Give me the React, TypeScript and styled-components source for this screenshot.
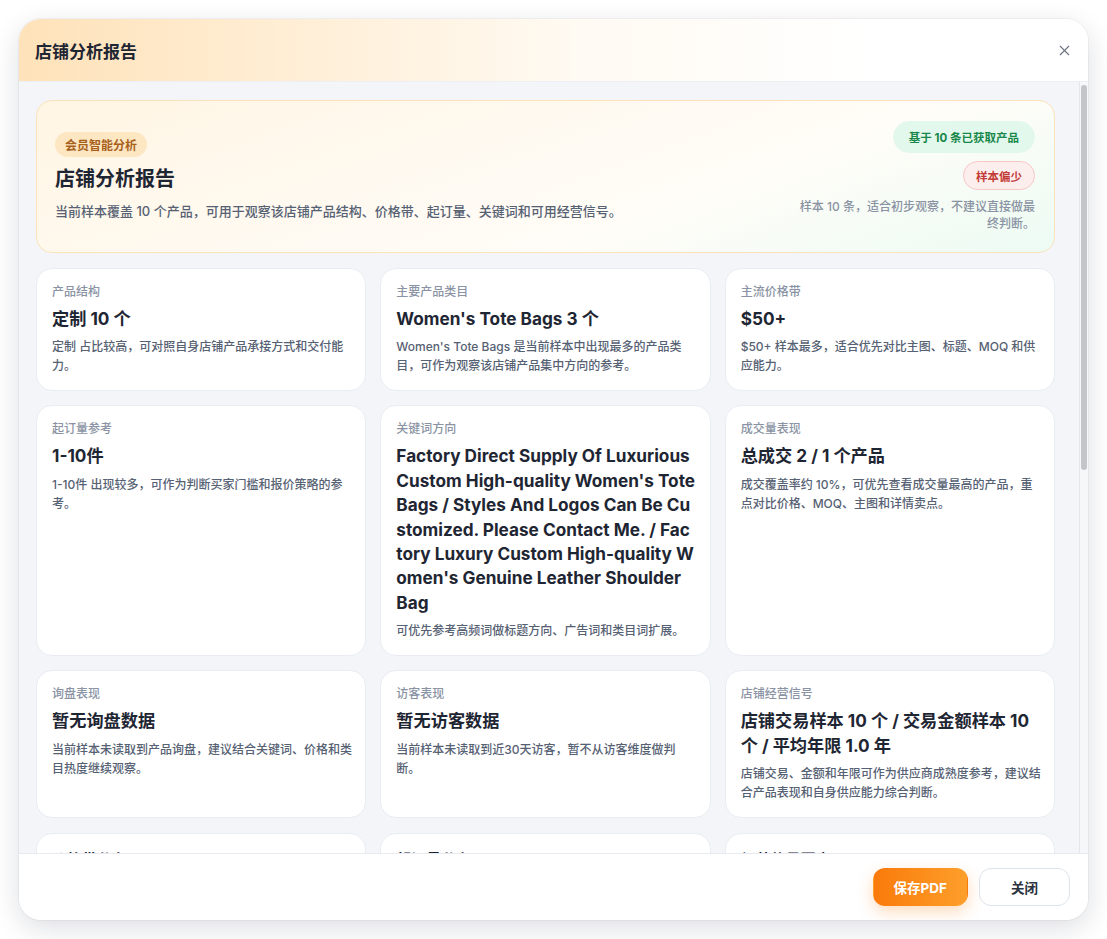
import React from 'react';
import styled, { createGlobalStyle } from 'styled-components';
import { X } from 'lucide-react';

const GlobalStyle = createGlobalStyle`
  * { box-sizing: border-box; }
  html, body { margin: 0; padding: 0; background: #ffffff; }
  body {
    font-family: Inter, "Noto Sans CJK SC", "Noto Sans", sans-serif;
    color: #1f2633;
    -webkit-font-smoothing: antialiased;
  }
`;

const Page = styled.div`
  width: 1107px;
  height: 939px;
  padding: 19px;
`;

const Modal = styled.div`
  height: 901px;
  display: flex;
  flex-direction: column;
  background: #fff;
  border-radius: 22px;
  overflow: hidden;
  box-shadow: 0 8px 28px rgba(15, 23, 42, 0.14), 0 0 0 1px rgba(15, 23, 42, 0.04);
`;

const Header = styled.div`
  height: 63px;
  flex: none;
  display: flex;
  align-items: center;
  justify-content: space-between;
  padding: 0 15px 0 16px;
  background: linear-gradient(90deg, #fee2b9 0%, #ffefd8 28%, #fffaf2 52%, #ffffff 80%);
  border-bottom: 1px solid #eceff4;
`;

const HeaderTitle = styled.h1`
  margin: 0;
  font-size: 17px;
  font-weight: 700;
  color: #1f2633;
`;

const CloseIcon = styled.button`
  border: none;
  background: none;
  padding: 0;
  display: flex;
  color: #6b7280;
  cursor: pointer;
`;

const BodyRow = styled.div`
  flex: 1;
  min-height: 0;
  display: flex;
  background: #f3f5f9;
`;

const Body = styled.div`
  flex: 1;
  min-width: 0;
  overflow-y: auto;
  scrollbar-width: none;
  padding: 18px 24px 24px 17px;
  display: flex;
  flex-direction: column;
  gap: 15px;

  &::-webkit-scrollbar {
    display: none;
  }
`;

// static rail, the headless browser hides real scrollbars
const ScrollRail = styled.div`
  width: 9px;
  flex: none;
  background: #f6f7f9;
  border-left: 1px solid #e3e6eb;
  padding: 3px 1px 0 1px;
`;

const ScrollThumb = styled.div`
  height: 385px;
  width: 6px;
  border-radius: 3px;
  background: #c3c5c9;
`;

const Hero = styled.div`
  flex: none;
  display: flex;
  align-items: center;
  justify-content: space-between;
  gap: 24px;
  padding: 20px 19px 20px 18px;
  border: 1px solid #fbe2bb;
  border-radius: 16px;
  background: linear-gradient(160deg, #fff5e3 0%, #fffaf2 45%, #fffdf8 65%, #ecfbf3 100%);
`;

const HeroMain = styled.div`
  display: flex;
  flex-direction: column;
  align-items: flex-start;
  gap: 8px;
`;

const MemberBadge = styled.span`
  height: 25px;
  display: inline-flex;
  align-items: center;
  padding: 0 10px;
  border-radius: 13px;
  background: #fde7c2;
  color: #a8611b;
  font-size: 12px;
  font-weight: 700;
`;

const HeroTitle = styled.h2`
  margin: 0;
  font-size: 20px;
  line-height: 28px;
  font-weight: 700;
  color: #1f2633;
`;

const HeroText = styled.p`
  margin: 0;
  font-size: 13px;
  line-height: 20px;
  font-weight: 500;
  color: #566173;
`;

const HeroSide = styled.div`
  display: flex;
  flex-direction: column;
  align-items: flex-end;
  gap: 8px;
`;

const Pill = styled.span<{ $tone: 'green' | 'red' }>`
  display: inline-flex;
  align-items: center;
  border-radius: 16px;
  font-size: 11.5px;
  font-weight: 700;
  height: ${(p) => (p.$tone === 'green' ? '32px' : '29px')};
  padding: ${(p) => (p.$tone === 'green' ? '0 15px' : '0 12px')};
  background: ${(p) => (p.$tone === 'green' ? '#e3f8ec' : '#fdeeee')};
  color: ${(p) => (p.$tone === 'green' ? '#17874a' : '#c23a36')};
  border: 1px solid ${(p) => (p.$tone === 'green' ? '#e3f8ec' : '#f6c6c4')};
`;

const SideNote = styled.p`
  margin: 0;
  max-width: 236px;
  text-align: right;
  font-size: 12px;
  line-height: 17px;
  font-weight: 500;
  color: #8a93a3;
`;

const Grid = styled.div`
  flex: none;
  display: grid;
  grid-template-columns: repeat(3, 1fr);
  gap: 14px;
`;

const Card = styled.div`
  background: #fff;
  border: 1px solid #e9edf3;
  border-radius: 16px;
  padding: 15px 12px 15px 15px;
  display: flex;
  flex-direction: column;
`;

const Label = styled.div`
  font-size: 12px;
  line-height: 16px;
  font-weight: 500;
  color: #8a93a3;
`;

const Value = styled.div`
  margin-top: 7px;
  margin-right: 2px;
  font-size: 17.2px;
  line-height: 24.4px;
  font-weight: 700;
  color: #1f2633;
  word-break: break-all;
`;

const Note = styled.p`
  margin: 6px 0 0;
  font-size: 12px;
  line-height: 19px;
  font-weight: 500;
  color: #566173;
`;

const SectionTitle = styled.div`
  font-size: 15px;
  line-height: 22px;
  font-weight: 700;
  color: #1f2633;
  margin-bottom: 12px;
`;

const BarRow = styled.div`
  display: grid;
  grid-template-columns: 70px 1fr 30px;
  align-items: center;
  gap: 10px;
  font-size: 12px;
  color: #566173;
  font-weight: 500;
  height: 30px;
`;

const BarTrack = styled.div`
  height: 8px;
  border-radius: 4px;
  background: #eef1f5;
  overflow: hidden;
`;

const BarFill = styled.div`
  height: 100%;
  border-radius: 4px;
  background: linear-gradient(90deg, #fb8a1c, #fdb14a);
`;

const Count = styled.span`
  text-align: right;
  color: #1f2633;
  font-weight: 600;
`;

const SignalList = styled.ul`
  margin: 0;
  padding-left: 18px;
  font-size: 12px;
  line-height: 22px;
  color: #566173;
  font-weight: 500;
`;

const Footer = styled.div`
  height: 67px;
  flex: none;
  display: flex;
  align-items: center;
  justify-content: flex-end;
  gap: 11px;
  padding: 0 18px;
  border-top: 1px solid #e7ebf1;
  background: #fff;
`;

const Button = styled.button<{ $primary?: boolean }>`
  height: 38px;
  border-radius: 12px;
  font-family: inherit;
  font-size: 13.5px;
  font-weight: 700;
  cursor: pointer;
  padding: 0 20px;
  min-width: ${(p) => (p.$primary ? '95px' : '91px')};
  color: ${(p) => (p.$primary ? '#fff' : '#2b3340')};
  border: 1px solid ${(p) => (p.$primary ? 'transparent' : '#dde3eb')};
  background: ${(p) => (p.$primary ? 'linear-gradient(90deg, #fa7a0a, #fd9f2b)' : '#fff')};
  box-shadow: ${(p) => (p.$primary ? '0 6px 16px rgba(250, 130, 20, 0.28)' : 'none')};
`;

const metrics = [
  { label: '产品结构', value: '定制 10 个', note: '定制 占比较高，可对照自身店铺产品承接方式和交付能力。' },
  {
    label: '主要产品类目',
    value: "Women's Tote Bags 3 个",
    note: "Women's Tote Bags 是当前样本中出现最多的产品类目，可作为观察该店铺产品集中方向的参考。",
  },
  { label: '主流价格带', value: '$50+', note: '$50+ 样本最多，适合优先对比主图、标题、MOQ 和供应能力。' },
  { label: '起订量参考', value: '1-10件', note: '1-10件 出现较多，可作为判断买家门槛和报价策略的参考。' },
  {
    label: '关键词方向',
    value:
      "Factory Direct Supply Of Luxurious Custom High-quality Women's Tote Bags / Styles And Logos Can Be Customized. Please Contact Me. / Factory Luxury Custom High-quality Women's Genuine Leather Shoulder Bag",
    note: '可优先参考高频词做标题方向、广告词和类目词扩展。',
  },
  { label: '成交量表现', value: '总成交 2 / 1 个产品', note: '成交覆盖率约 10%，可优先查看成交量最高的产品，重点对比价格、MOQ、主图和详情卖点。' },
  { label: '询盘表现', value: '暂无询盘数据', note: '当前样本未读取到产品询盘，建议结合关键词、价格和类目热度继续观察。' },
  { label: '访客表现', value: '暂无访客数据', note: '当前样本未读取到近30天访客，暂不从访客维度做判断。' },
  {
    label: '店铺经营信号',
    value: '店铺交易样本 10 个 / 交易金额样本 10 个 / 平均年限 1.0 年',
    note: '店铺交易、金额和年限可作为供应商成熟度参考，建议结合产品表现和自身供应能力综合判断。',
  },
];

const priceBands = [
  { name: '$50+', count: 6 },
  { name: '$20-50', count: 2 },
  { name: '$10-20', count: 1 },
  { name: '$5-10', count: 1 },
  { name: '$0-5', count: 0 },
];

const moqBands = [
  { name: '1-10件', count: 6 },
  { name: '11-50件', count: 2 },
  { name: '51-100件', count: 1 },
  { name: '101-500件', count: 1 },
  { name: '500件以上', count: 0 },
];

const signals = [
  '样本以定制产品为主，交付能力是核心比较项。',
  '价格带集中在 $50+，属于中高价位区间。',
  '起订量门槛较低，适合小批量试单买家。',
  '成交与询盘数据偏少，结论仅供参考。',
  '建议补充更多产品样本后再次分析。',
];

const Distribution = ({ title, rows }: { title: string; rows: { name: string; count: number }[] }) => (
  <Card>
    <SectionTitle>{title}</SectionTitle>
    {rows.map((r) => (
      <BarRow key={r.name}>
        <span>{r.name}</span>
        <BarTrack>
          <BarFill style={{ width: `${(r.count / 10) * 100}%` }} />
        </BarTrack>
        <Count>{r.count}</Count>
      </BarRow>
    ))}
  </Card>
);

const App = () => {
  return (
    <>
      <GlobalStyle />
      <Page>
        <Modal>
          <Header>
            <HeaderTitle>店铺分析报告</HeaderTitle>
            <CloseIcon aria-label="关闭">
              <X size={17} strokeWidth={1.6} />
            </CloseIcon>
          </Header>

          <BodyRow>
            <Body>
              <Hero>
                <HeroMain>
                  <MemberBadge>会员智能分析</MemberBadge>
                  <HeroTitle>店铺分析报告</HeroTitle>
                  <HeroText>当前样本覆盖 10 个产品，可用于观察该店铺产品结构、价格带、起订量、关键词和可用经营信号。</HeroText>
                </HeroMain>
                <HeroSide>
                  <Pill $tone="green">基于 10 条已获取产品</Pill>
                  <Pill $tone="red">样本偏少</Pill>
                  <SideNote>样本 10 条，适合初步观察，不建议直接做最终判断。</SideNote>
                </HeroSide>
              </Hero>

              <Grid>
                {metrics.map((m) => (
                  <Card key={m.label}>
                    <Label>{m.label}</Label>
                    <Value>{m.value}</Value>
                    <Note>{m.note}</Note>
                  </Card>
                ))}
              </Grid>

              <Grid>
                <Distribution title="价格带分布" rows={priceBands} />
                <Distribution title="起订量分布" rows={moqBands} />
                <Card>
                  <SectionTitle>经营信号要点</SectionTitle>
                  <SignalList>
                    {signals.map((s) => (
                      <li key={s}>{s}</li>
                    ))}
                  </SignalList>
                </Card>
              </Grid>

              <Grid>
                <Card>
                  <SectionTitle>选品建议</SectionTitle>
                  <SignalList>
                    <li>优先参考 $50+ 价格带的定制托特包。</li>
                    <li>关注皮革材质与 Logo 定制卖点。</li>
                    <li>结合自身交付周期评估承接能力。</li>
                  </SignalList>
                </Card>
                <Card>
                  <SectionTitle>报价建议</SectionTitle>
                  <SignalList>
                    <li>以 1-10件 起订量作为试单门槛。</li>
                    <li>阶梯价格覆盖 11-50件 批量需求。</li>
                    <li>定制费用建议单独列明。</li>
                  </SignalList>
                </Card>
                <Card>
                  <SectionTitle>后续观察</SectionTitle>
                  <SignalList>
                    <li>补充更多产品样本以提高可信度。</li>
                    <li>持续跟踪询盘与访客数据变化。</li>
                    <li>定期重新生成店铺分析报告。</li>
                  </SignalList>
                </Card>
              </Grid>
            </Body>
            <ScrollRail>
              <ScrollThumb />
            </ScrollRail>
          </BodyRow>

          <Footer>
            <Button $primary>保存PDF</Button>
            <Button>关闭</Button>
          </Footer>
        </Modal>
      </Page>
    </>
  );
};

export default App;
